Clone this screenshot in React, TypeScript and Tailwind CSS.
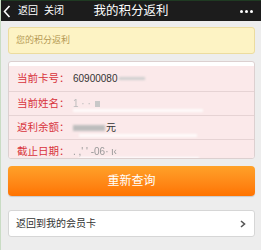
import React from "react";

const font = { fontFamily: '"Liberation Sans", "Noto Sans CJK SC", sans-serif' };

function Row({ label, children, first }: { label: string; children: React.ReactNode; first?: boolean }) {
  return (
    <div
      className={`flex items-center bg-[#fbe9ea] pl-[8px] ${first ? "h-[25px]" : "h-[24px] border-t border-[#e6d3d4]"}`}
    >
      <span className="w-[56px] text-[10.5px] leading-none text-[#d8343c]">{label}</span>
      <div className="flex items-center text-[10px] leading-none text-[#333]">{children}</div>
    </div>
  );
}

export default function App() {
  return (
    <div className="w-[261px] h-[250px] bg-[#ededed] overflow-hidden border-l border-[#c9dcc4]" style={font}>
      <div className="relative h-[21px] bg-[#1c1c1c] flex items-center text-white border-t border-[#1f3a22]">
        <svg width="8" height="13" viewBox="0 0 8 13" className="ml-[2px]">
          <polyline points="6.5,1 1.5,6.5 6.5,12" fill="none" stroke="white" strokeWidth="1.6" />
        </svg>
        <span className="ml-[7px] text-[10px] leading-none">返回</span>
        <span className="ml-[6px] text-[10px] leading-none">关闭</span>
        <span className="absolute left-0 right-0 text-center text-[12.5px] leading-none pointer-events-none">我的积分返利</span>
        <div className="ml-auto mr-[8px] flex gap-[2px]">
          <span className="w-[3px] h-[3px] rounded-full bg-white" />
          <span className="w-[3px] h-[3px] rounded-full bg-white" />
          <span className="w-[3px] h-[3px] rounded-full bg-white" />
        </div>
      </div>
      <div className="pl-[7px] pr-[6px]">
        <div className="mt-[6px] h-[27px] rounded-[3px] bg-[#fdf3c4] border border-[#ecdc9f] flex items-center pl-[7px] text-[9px] text-[#b59a55]">
          您的积分返利
        </div>
        <div className="relative mt-[7px] h-[98px] rounded-[3px] bg-white border border-[#dcd0d0] overflow-hidden pt-[4px]">
          <Row label="当前卡号：" first>
            <span>60900080</span>
            <span className="ml-[1px] w-[26px] h-[3px] bg-[#cfcfcf] blur-[1px]" />
          </Row>
          <Row label="当前姓名：">
            <span className="text-[#bbb] blur-[0.5px]">1 · ·</span>
            <span className="ml-[4px] w-[5px] h-[6px] bg-[#c8c8c8] blur-[0.5px]" />
          </Row>
          <Row label="返利余额：">
            <span className="w-[32px] h-[6px] bg-[#bdbdbd] blur-[1.2px]" />
            <span className="ml-[1px]">元</span>
          </Row>
          <Row label="截止日期：">
            <span className="text-[#999] blur-[0.4px]">. ,' ' -06· ι‹</span>
          </Row>
          <div className="absolute left-[64px] top-[47px] w-[130px] h-[3px] bg-white/80 blur-[1px]" />
          <div className="absolute left-[70px] top-[72px] w-[118px] h-[3px] bg-white/80 blur-[1px]" />
          <div className="absolute left-[70px] top-[95px] w-[120px] h-[3px] bg-white/90 blur-[1px]" />
        </div>
        <div className="mt-[7px] h-[30px] rounded-[4px] bg-gradient-to-b from-[#ffa128] to-[#ff7300] flex items-center justify-center text-white text-[12px] shadow-[0_1px_1px_rgba(0,0,0,0.15)]">
          重新查询
        </div>
        <div className="mt-[14px] h-[27px] rounded-[3px] bg-white border border-[#d6d6d6] flex items-center pl-[7px] pr-[8px] text-[10px] text-[#333]">
          <span>返回到我的会员卡</span>
          <svg width="6" height="8" viewBox="0 0 6 8" className="ml-auto">
            <polyline points="1,1 4.5,4 1,7" fill="none" stroke="#555" strokeWidth="1.6" />
          </svg>
        </div>
      </div>
    </div>
  );
}
